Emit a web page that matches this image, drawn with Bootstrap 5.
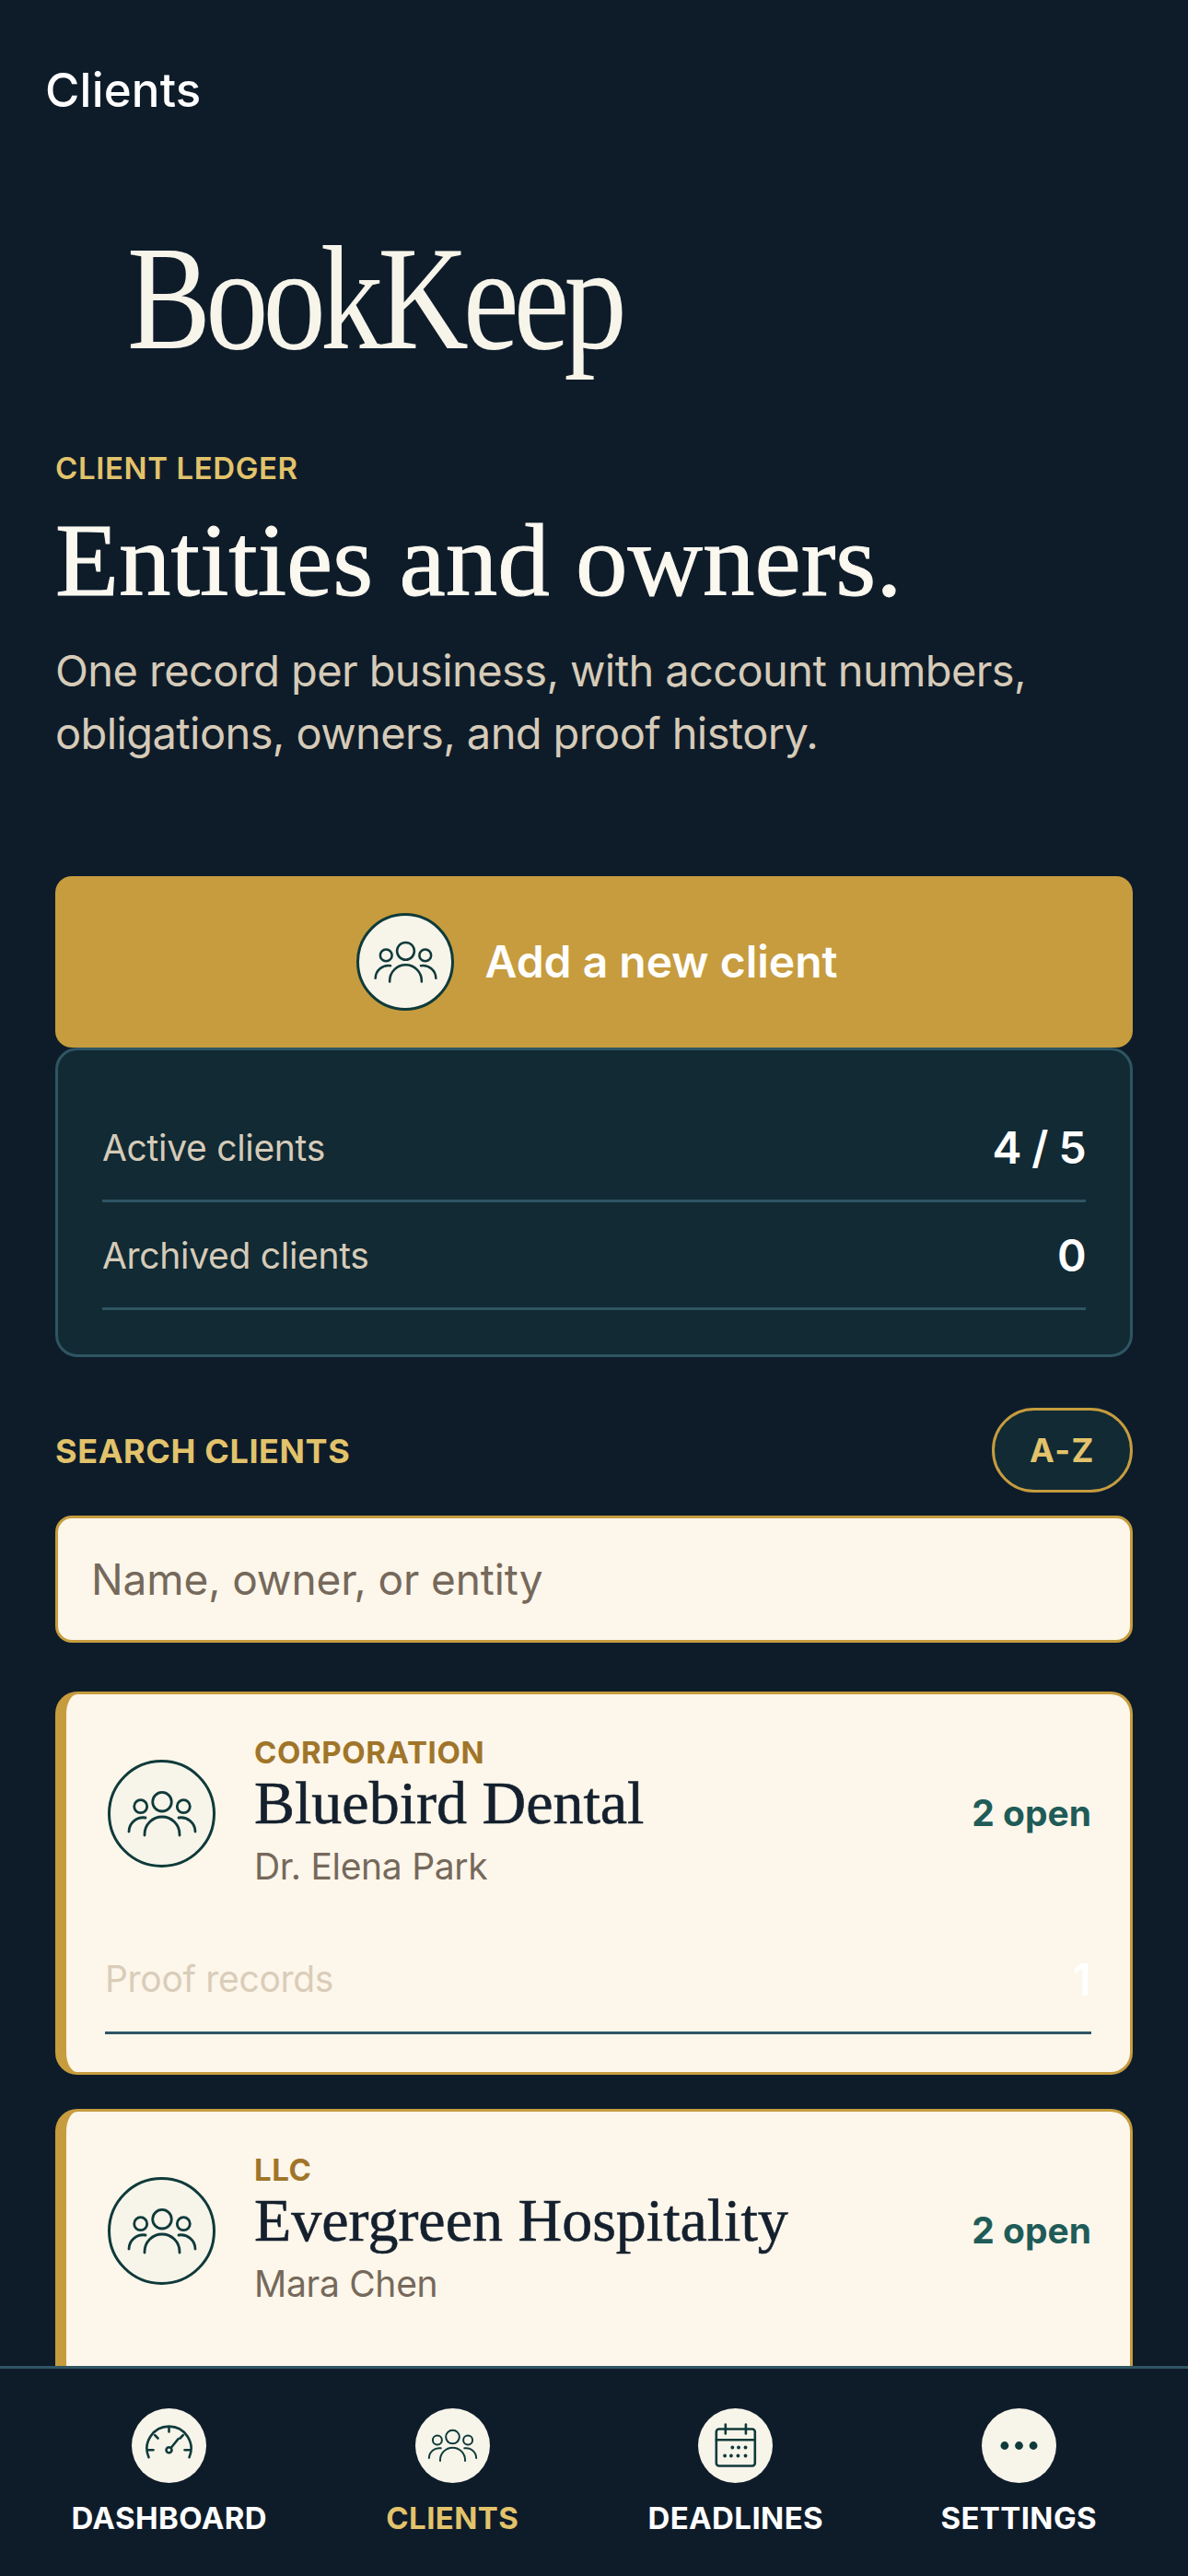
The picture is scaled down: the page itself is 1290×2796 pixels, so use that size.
<!DOCTYPE html>
<html lang="en">
<head>
    <meta charset="UTF-8">
    <meta name="viewport" content="width=device-width, initial-scale=1">
    <title>Clients - BookKeep</title>
    <link href="https://cdn.jsdelivr.net/npm/bootstrap@5.3.2/dist/css/bootstrap.min.css" rel="stylesheet">
    <style>
        body { background: #0e1c2a; font-family: Inter, "Liberation Sans", sans-serif; }
        .app-shell { height: 2796px; overflow: hidden; }
        .app-main { min-height: 0; overflow: hidden; padding: 0 60px; }
        .top-title { height: 128px; padding: 68px 0 0 49px; margin: 0 -60px; font-size: 51px; line-height: 60px; font-weight: 500; color: #fff; letter-spacing: .2px; }
        .logo-word { margin: 111px 0 0 78px; height: 170px; font-family: "Liberation Serif", serif; font-size: 162px; line-height: 170px; color: #f7f4ea; letter-spacing: -7px; transform: scaleX(.843); transform-origin: left center; white-space: nowrap; }
        .ledger-label { margin-top: 79px; font-size: 33px; line-height: 40px; font-weight: 600; color: #e2c36b; letter-spacing: .6px; }
        .hero-title { margin: 20px 0 0; font-family: "Liberation Serif", serif; font-size: 113px; line-height: 120px; font-weight: 400; color: #fbf8f0; -webkit-text-stroke: 1px #fbf8f0; }
        .hero-copy { margin: 26px 0 0; font-size: 47px; line-height: 68px; color: #d6cbb8; letter-spacing: -.6px; }
        .add-btn { margin-top: 121px; height: 186px; gap: 33px; padding-left: 19px; background: #c69c3e; border: 0; border-radius: 18px; color: #fff; font-size: 48px; font-weight: 600; }
        .add-btn:hover { background: #c69c3e; color: #fff; }
        .add-icon { width: 106px; height: 106px; background: #f7f4ea; border: 3px solid #0f3a3a; }
        .add-icon svg { width: 73px; height: 73px; }
        .stats-box { background: #112a34; border: 3px solid #2f5563; border-radius: 24px; padding: 48px; }
        .stat-row { height: 117px; padding-top: 2px; border-bottom: 3px solid #2f5563; }
        .stat-name { font-size: 39px; color: #d6cbb8; letter-spacing: -.3px; }
        .stat-value { font-size: 48px; font-weight: 600; color: #fff; letter-spacing: -.6px; }
        .search-head { margin-top: 55px; height: 92px; }
        .search-label { padding-top: 2px; font-size: 36px; font-weight: 700; color: #e2c36b; letter-spacing: .6px; }
        .sort-pill { width: 153px; height: 92px; padding: 0; background: #112a34; border: 3px solid #c69c3e; color: #e2c36b; font-size: 36px; font-weight: 700; letter-spacing: 1.5px; }
        .sort-pill:hover { background: #112a34; border-color: #c69c3e; color: #e2c36b; }
        .client-search { margin-top: 25px; height: 138px; padding: 0 36px; background: #fdf6ea; border: 3px solid #c69c3e; border-radius: 18px; font-size: 46px; letter-spacing: -.1px; }
        .client-search::placeholder { color: #75695b; opacity: 1; }
        .client-card { background: #fdf6ea; border: 3px solid #c69c3e; border-left-width: 12px; border-radius: 24px; padding: 45px 42px 41px 45px; }
        .client-card-cut { min-height: 416px; }
        .client-list { margin-top: 53px; gap: 37px; }
        .client-icon { width: 117px; height: 117px; background: #f7f4ea; border: 3px solid #0f3a3a; }
        .client-icon svg { width: 80px; height: 80px; }
        .client-info { padding-left: 42px; }
        .client-type { font-size: 33px; line-height: 36px; font-weight: 700; color: #a0752a; letter-spacing: .6px; }
        .client-name { margin: 0; font-family: "Liberation Serif", serif; font-size: 66px; line-height: 74px; font-weight: 400; color: #14202e; -webkit-text-stroke: .6px #14202e; }
        .client-owner { margin-top: 5px; font-size: 39px; line-height: 54px; color: #75695b; letter-spacing: -.3px; }
        .open-count { font-size: 39px; font-weight: 700; color: #1f5c58; }
        .proof-row { margin: 42px 0 0 -3px; height: 113px; padding-bottom: 3px; border-bottom: 3px solid #2f5563; }
        .proof-name { font-size: 39px; color: #d9cdb9; letter-spacing: -.3px; }
        .proof-value { font-size: 48px; font-weight: 600; color: #fff; }
        .tab-bar { height: 228px; flex-shrink: 0; padding: 43px 30px 0; background: #0e1c2a; border-top: 3px solid #2f5563; display: grid; grid-template-columns: repeat(4, 1fr); }
        .tab-item { gap: 18px; color: #fff; font-size: 33px; line-height: 40px; font-weight: 700; letter-spacing: .4px; }
        .tab-item.is-active { color: #e2c36b; }
        .tab-icon { width: 81px; height: 81px; background: #f7f4ea; }
        .tab-icon svg { width: 57px; height: 57px; }
    </style>
</head>
<body>
    <svg width="0" height="0" class="d-block position-absolute">
        <symbol id="i-people" viewBox="0 0 80 80" fill="none" stroke="#0f3a3a" stroke-width="2.8" stroke-linecap="round">
            <circle cx="40" cy="26.7" r="10.3"/>
            <circle cx="16.7" cy="31.7" r="7"/>
            <circle cx="63.3" cy="31.7" r="7"/>
            <path d="M21 63v-1a19 19 0 0 1 38 0v1"/>
            <path d="M4 59a15.5 15.5 0 0 1 18-15"/>
            <path d="M76 59a15.5 15.5 0 0 0-18-15"/>
        </symbol>
        <symbol id="i-gauge" viewBox="-28.5 -28.5 57 57" fill="none" stroke="#0f3a3a" stroke-width="2.6" stroke-linecap="round">
            <path d="M-22 12.7A24 24 0 1 1 22 12.7"/>
            <path d="M0-20v5M-23 4.7h6M17 4.7h6M-15.3-11.3l3.3 3.3M15.3-11.3l-3.3 3.3M2.5 2l7.5-9.3"/>
            <circle cx="0" cy="4.7" r="3"/>
        </symbol>
        <symbol id="i-calendar" viewBox="-28.5 -28.5 57 57" fill="none" stroke="#0f3a3a" stroke-width="2.6" stroke-linecap="round">
            <rect x="-20.7" y="-18" width="42" height="40" rx="3"/>
            <path d="M-20.7-6.3h42M-10.7-23v10M11.4-23v10"/>
            <g fill="#0f3a3a" stroke="none">
                <circle cx="-3.2" cy="2" r="1.9"/><circle cx="3.5" cy="2" r="1.9"/><circle cx="11" cy="2" r="1.9"/>
                <circle cx="-11.4" cy="11" r="1.9"/><circle cx="-4.6" cy="11" r="1.9"/><circle cx="2.9" cy="11" r="1.9"/><circle cx="11" cy="11" r="1.9"/>
            </g>
        </symbol>
        <symbol id="i-more" viewBox="-28.5 -28.5 57 57" fill="#0f3a3a">
            <circle cx="-15.6" cy="0" r="4.4"/><circle cx="0" cy="0" r="4.4"/><circle cx="15.6" cy="0" r="4.4"/>
        </symbol>
    </svg>

    <div class="app-shell d-flex flex-column">
        <main class="app-main flex-grow-1">
            <div class="top-title">Clients</div>
            <div class="logo-word">BookKeep</div>
            <div class="ledger-label text-uppercase">Client ledger</div>
            <h1 class="hero-title">Entities and owners.</h1>
            <p class="hero-copy">One record per business, with account numbers, obligations, owners, and proof history.</p>

            <button class="btn add-btn w-100 d-flex align-items-center justify-content-center">
                <span class="add-icon rounded-circle d-flex align-items-center justify-content-center"><svg><use href="#i-people"/></svg></span>
                Add a new client
            </button>

            <div class="stats-box">
                <div class="stat-row d-flex align-items-center justify-content-between">
                    <span class="stat-name">Active clients</span><span class="stat-value">4 / 5</span>
                </div>
                <div class="stat-row d-flex align-items-center justify-content-between">
                    <span class="stat-name">Archived clients</span><span class="stat-value">0</span>
                </div>
            </div>

            <div class="search-head d-flex align-items-center justify-content-between">
                <span class="search-label text-uppercase">Search clients</span>
                <button class="btn sort-pill rounded-pill">A-Z</button>
            </div>
            <input class="form-control client-search" type="text" placeholder="Name, owner, or entity">

            <div class="client-list d-flex flex-column">
                <div class="client-card">
                    <div class="d-flex align-items-center">
                        <span class="client-icon rounded-circle d-flex align-items-center justify-content-center flex-shrink-0"><svg><use href="#i-people"/></svg></span>
                        <div class="client-info flex-grow-1">
                            <div class="client-type text-uppercase">Corporation</div>
                            <h2 class="client-name">Bluebird Dental</h2>
                            <div class="client-owner">Dr. Elena Park</div>
                        </div>
                        <span class="open-count">2 open</span>
                    </div>
                    <div class="proof-row d-flex align-items-center justify-content-between">
                        <span class="proof-name">Proof records</span><span class="proof-value">1</span>
                    </div>
                </div>
                <div class="client-card client-card-cut">
                    <div class="d-flex align-items-center">
                        <span class="client-icon rounded-circle d-flex align-items-center justify-content-center flex-shrink-0"><svg><use href="#i-people"/></svg></span>
                        <div class="client-info flex-grow-1">
                            <div class="client-type text-uppercase">LLC</div>
                            <h2 class="client-name">Evergreen Hospitality</h2>
                            <div class="client-owner">Mara Chen</div>
                        </div>
                        <span class="open-count">2 open</span>
                    </div>
                </div>
            </div>
        </main>

        <nav class="tab-bar">
            <div class="tab-item d-flex flex-column align-items-center text-uppercase">
                <span class="tab-icon rounded-circle d-flex align-items-center justify-content-center"><svg><use href="#i-gauge"/></svg></span>Dashboard
            </div>
            <div class="tab-item is-active d-flex flex-column align-items-center text-uppercase">
                <span class="tab-icon rounded-circle d-flex align-items-center justify-content-center"><svg><use href="#i-people"/></svg></span>Clients
            </div>
            <div class="tab-item d-flex flex-column align-items-center text-uppercase">
                <span class="tab-icon rounded-circle d-flex align-items-center justify-content-center"><svg><use href="#i-calendar"/></svg></span>Deadlines
            </div>
            <div class="tab-item d-flex flex-column align-items-center text-uppercase">
                <span class="tab-icon rounded-circle d-flex align-items-center justify-content-center"><svg><use href="#i-more"/></svg></span>Settings
            </div>
        </nav>
    </div>
    <script src="https://cdn.jsdelivr.net/npm/bootstrap@5.3.2/dist/js/bootstrap.bundle.min.js"></script>
</body>
</html>
